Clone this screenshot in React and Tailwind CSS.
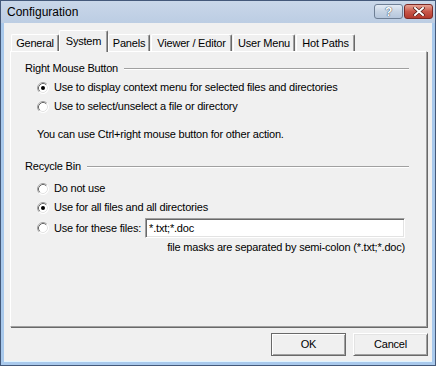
import React from "react";

function Radio({ checked }) {
  return (
    <svg width="12" height="12" viewBox="0 0 12 12" className="shrink-0">
      <circle cx="6" cy="6" r="5.5" fill="#ffffff" stroke="#ffffff" />
      <path d="M2.11 9.89 A5.5 5.5 0 0 1 9.89 2.11" fill="none" stroke="#a0a0a0" />
      <path d="M2.82 9.18 A4.5 4.5 0 0 1 9.18 2.82" fill="none" stroke="#696969" />
      <path d="M9.18 2.82 A4.5 4.5 0 0 1 2.82 9.18" fill="none" stroke="#e3e3e3" />
      {checked && <circle cx="6" cy="6" r="2" fill="#000000" />}
    </svg>
  );
}

function RadioRow({ checked, children, className = "" }) {
  return (
    <div className={"flex h-[19px] items-center pl-[26px] " + className}>
      <Radio checked={checked} />
      <span className="ml-[5px] whitespace-nowrap">{children}</span>
    </div>
  );
}

function GroupHeader({ label, className = "" }) {
  return (
    <div className={"flex h-[19px] items-center pl-[14px] pr-[17px] " + className}>
      <span className="whitespace-nowrap">{label}</span>
      <div className="ml-[6px] h-[2px] flex-1 border-t border-b border-t-[#a0a0a0] border-b-white" />
    </div>
  );
}

function Tab({ label, selected, w }) {
  if (selected) {
    return (
      <div
        className={
          "relative z-10 -mb-px flex h-[22px] items-start justify-center rounded-t-[2px] border-t border-l border-r border-t-white border-l-white border-r-[#696969] bg-[#f0f0f0] pt-[2px] shadow-[inset_-1px_0_0_#a0a0a0] " +
          w
        }
      >
        {label}
      </div>
    );
  }
  return (
    <div
      className={
        "flex h-[17px] items-center justify-center rounded-t-[2px] border-t border-l border-r border-t-white border-l-white border-r-[#696969] bg-[#f0f0f0] shadow-[inset_-1px_0_0_#a0a0a0] " +
        w
      }
    >
      {label}
    </div>
  );
}

export default function App() {
  return (
    <div className="flex h-[366px] w-[436px] flex-col border border-[#44597a] bg-[#a9c9ec] font-['Liberation_Sans',Arial,sans-serif] text-[11px] tracking-[-0.2px] text-black">
      {/* Title bar */}
      <div className="flex h-[22px] shrink-0 items-start bg-gradient-to-b from-[#c9d7e9] to-[#bccde3]">
        <div className="ml-[6px] mt-[4px] text-[12px] leading-[14px] tracking-normal text-black">Configuration</div>
        <div className="ml-auto mr-[2px] mt-[3px] flex gap-[1px]">
          <div className="flex h-[15px] w-[29px] items-center justify-center rounded-[3px] border border-[#6e7f95] bg-gradient-to-b from-[#e3ebf5] via-[#c7d4e4] to-[#b5c6dc]">
            <span className="text-[12px] font-bold leading-none text-white [text-shadow:0_0_1px_#33445a,0_0_1px_#33445a]">?</span>
          </div>
          <div className="flex h-[15px] w-[29px] items-center justify-center rounded-[3px] border border-[#7b2a26] bg-gradient-to-b from-[#e7a496] via-[#c8574a] to-[#b33a2e]">
            <svg width="12" height="9" viewBox="0 0 12 9">
              <path d="M2 1 L10 8 M10 1 L2 8" stroke="#4a1410" strokeWidth="3.2" strokeLinecap="square" />
              <path d="M2 1 L10 8 M10 1 L2 8" stroke="#ffffff" strokeWidth="2" strokeLinecap="square" />
            </svg>
          </div>
        </div>
      </div>

      {/* Client area */}
      <div className="mx-[3px] mb-[3px] flex flex-1 flex-col border-b border-[#e0f4ff] bg-[#f0f0f0]">
        {/* Tabs */}
        <div className="flex items-end pl-[7px] pt-[7px]">
          <Tab label="General" w="w-[48px]" />
          <Tab label="System" selected w="w-[49px]" />
          <Tab label="Panels" w="w-[42px]" />
          <div className="w-px" />
          <Tab label="Viewer / Editor" w="w-[81px]" />
          <div className="w-px" />
          <Tab label="User Menu" w="w-[62px]" />
          <div className="w-px" />
          <Tab label="Hot Paths" w="w-[59px]" />
        </div>

        {/* Panel */}
        <div className="ml-[6px] flex h-[276px] w-[417px] flex-col border-t border-l border-r border-b border-t-white border-l-white border-r-[#a0a0a0] border-b-[#a0a0a0] shadow-[1px_1px_0_#696969] pt-[7px]">
          <GroupHeader label="Right Mouse Button" />
          <RadioRow checked>Use to display context menu for selected files and directories</RadioRow>
          <RadioRow>Use to select/unselect a file or directory</RadioRow>
          <div className="mt-[9px] flex h-[19px] items-center pl-[26px]">
            You can use Ctrl+right mouse button for other action.
          </div>

          <GroupHeader label="Recycle Bin" className="mt-[13px]" />
          <RadioRow className="mt-[3px]">Do not use</RadioRow>
          <RadioRow checked>Use for all files and all directories</RadioRow>
          <div className="mt-px flex h-[20px] items-center pl-[26px] pr-[21px]">
            <Radio />
            <span className="ml-[5px] whitespace-nowrap">Use for these files:</span>
            <div className="ml-[4px] flex h-[20px] flex-1 items-center border-t border-l border-b border-r border-t-[#a0a0a0] border-l-[#a0a0a0] border-b-white border-r-white bg-white pl-[3px] shadow-[inset_1px_1px_0_#696969,inset_-1px_-1px_0_#e3e3e3]">
              *.txt;*.doc
            </div>
          </div>
          <div className="flex h-[19px] items-center justify-end pr-[21px]">
            file masks are separated by semi-colon (*.txt;*.doc)
          </div>
        </div>

        {/* Buttons */}
        <div className="mt-[6px] flex justify-end gap-[7px] pr-[4px]">
          <div className="flex h-[23px] w-[75px] items-center justify-center border border-[#696969] bg-[#f0f0f0] shadow-[inset_1px_1px_0_#ffffff,inset_-1px_-1px_0_#a0a0a0]">
            OK
          </div>
          <div className="flex h-[23px] w-[75px] items-center justify-center border-t border-l border-r border-b border-t-white border-l-white border-r-[#696969] border-b-[#696969] bg-[#f0f0f0] shadow-[inset_1px_1px_0_#e3e3e3,inset_-1px_-1px_0_#a0a0a0]">
            Cancel
          </div>
        </div>
      </div>
    </div>
  );
}
